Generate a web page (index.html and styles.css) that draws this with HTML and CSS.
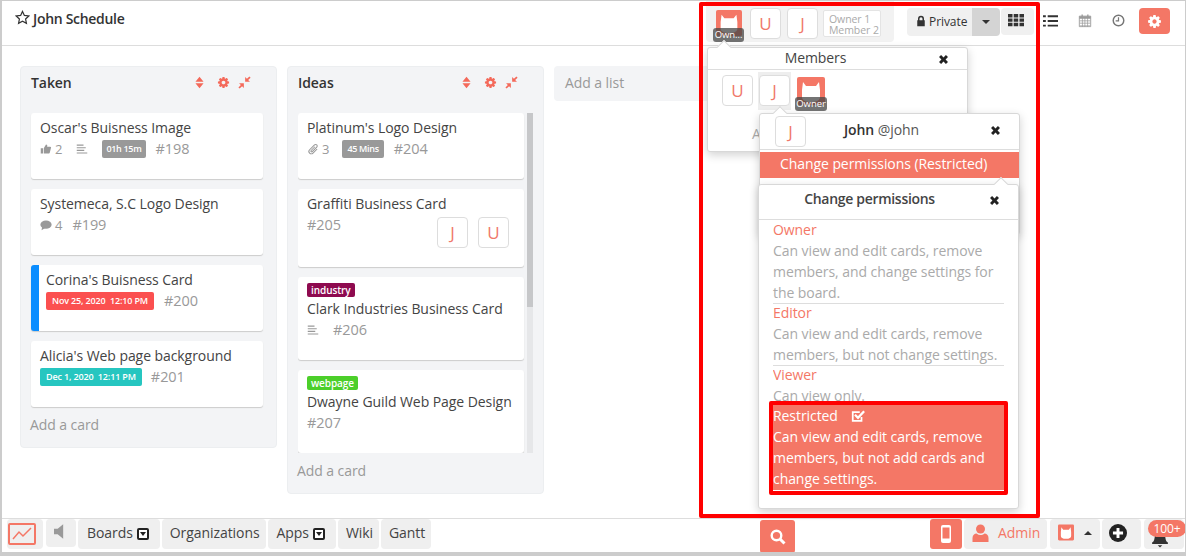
FILE: index.html
```html
<!DOCTYPE html>
<html>

<head>
    <title>John Schedule</title>
    <link rel="stylesheet" href="styles.css">
</head>

<body>
    <svg class="defs" width="0" height="0">
        <symbol id="i-cog" viewBox="0 0 1792 1792"><path fill-rule="evenodd" d="M1152 896q0-106-75-181t-181-75-181 75-75 181 75 181 181 75 181-75 75-181zm512-109v222q0 12-8 23t-20 13l-185 28q-19 54-39 91 35 50 107 138 10 12 10 25t-9 23q-27 37-99 108t-94 71q-12 0-26-9l-138-108q-44 23-91 38-16 136-29 186-7 28-36 28h-222q-14 0-24.500-8.500t-11.500-21.500l-28-184q-49-16-90-37l-141 107q-10 9-25 9-14 0-25-11-126-114-165-168-7-10-7-23 0-12 8-23 15-21 51-66.500t54-70.500q-27-50-41-99l-183-27q-13-2-21-12.500t-8-23.500v-222q0-12 8-23t19-13l186-28q14-46 39-92-40-57-107-138-10-12-10-24 0-10 9-23 26-36 98.500-107.500t94.500-71.500q13 0 26 10l138 107q44-23 91-38 16-136 29-186 7-28 36-28h222q14 0 24.500 8.500t11.500 21.500l28 184q49 16 90 37l142-107q9-9 24-9 13 0 25 10 129 119 165 170 7 8 7 22 0 12-8 23-15 21-51 66.500t-54 70.500q26 50 41 98l183 28q13 2 21 12.500t8 23.500z"/></symbol>
        <symbol id="i-times" viewBox="0 0 16 16"><path d="M4.500 1.500 8 5l3.500-3.500 3 3L11 8l3.500 3.500-3 3L8 11l-3.500 3.500-3-3L5 8 1.500 4.500z"/></symbol>
        <symbol id="i-sort" viewBox="0 0 16 16"><path d="M8 1l5 6H3zM8 15l-5-6h10z"/></symbol>
        <symbol id="i-compress" viewBox="0 0 16 16"><path d="M8.800 7.200V1.200l2.200 2.200L14 .5l1.500 1.500-3 3 2.200 2.200zM7.200 8.800v6L5 12.600 2 15.500.5 14l3-3-2.200-2.200z"/></symbol>
        <symbol id="i-lines" viewBox="0 0 16 16"><path d="M1 2h9v1.500H1zM1 5.500h12V7H1zM1 9h10v1.500H1zM1 12.500h14V14H1z"/></symbol>
        <symbol id="i-bear" viewBox="0 0 28 28"><rect width="28" height="28" rx="2" fill="#f47766"/><path d="M6 5l3 4h10l3-4 1 8v7c0 3-3 5-9 5s-9-2-9-5v-7z" fill="#fff"/></symbol>
    </svg>

    <div class="app">
        <header class="topbar">
            <div class="board-title">
                <svg class="star" viewBox="0 0 16 16"><path d="M8 1.500l2 4.300 4.700.6-3.400 3.200.9 4.700L8 12l-4.200 2.300.9-4.700L1.300 6.400 6 5.800z" fill="none" stroke="#333" stroke-width="1.300"/></svg>
                John Schedule
            </div>
            <div class="top-tools">
                <div class="member-strip">
                    <div class="owner-avatar">
                        <svg class="bear"><use href="#i-bear"/></svg>
                        <span class="owner-tag">Own...</span>
                    </div>
                    <div class="avatar">U</div>
                    <div class="avatar">J</div>
                    <div class="member-count">Owner 1<br>Member 2</div>
                </div>
                <div class="private-group">
                    <div class="private-btn">
                        <svg class="ico-12" viewBox="0 0 16 16"><path d="M4 7V5a4 4 0 0 1 8 0v2h1v8H3V7zm2 0h4V5a2 2 0 0 0-4 0z" fill="#333"/></svg>
                        Private
                    </div>
                    <div class="caret-btn"><span class="caret-down"></span></div>
                </div>
                <div class="grid-btn">
                    <svg class="ico-16" viewBox="0 0 16 16" fill="#111"><path d="M0 0h4.500v3.400H0zM5.700 0h4.500v3.400H5.700zM11.500 0H16v3.400h-4.500zM0 4.400h4.500v3.400H0zM5.700 4.400h4.500v3.400H5.700zM11.500 4.400H16v3.400h-4.500zM0 8.800h4.500v3.400H0zM5.700 8.800h4.500v3.400H5.700zM11.500 8.800H16v3.400h-4.500z"/></svg>
                </div>
                <svg class="tool-ico list-ico" viewBox="0 0 16 16" fill="#999"><path d="M0 2.500h3v2H0zM5 2.500h11v2H5zM0 7.500h3v2H0zM5 7.500h11v2H5zM0 12.500h3v2H0zM5 12.500h11v2H5z"/></svg>
                <svg class="tool-ico cal-ico" viewBox="0 0 16 16"><path d="M1.500 3h13v12h-13z" fill="none" stroke="#999"/><path d="M1.500 3h13v3h-13zM4 1h1.500v3H4zM10.500 1H12v3h-1.500zM2 8h12v.8H2zM2 10.500h12v.8H2zM2 13h12v.8H2zM4.500 6h.8v9h-.8zM7.500 6h.8v9h-.8zM10.700 6h.8v9h-.8z" fill="#999"/></svg>
                <svg class="tool-ico clock-ico" viewBox="0 0 16 16"><circle cx="8" cy="8" r="6.500" fill="none" stroke="#777" stroke-width="1.800"/><path d="M8 4v4.500H4.500" fill="none" stroke="#777" stroke-width="1.500"/></svg>
                <div class="settings-btn"><svg class="ico-14 white"><use href="#i-cog"/></svg></div>
            </div>
        </header>

        <main class="board">
            <section class="list list-taken">
                <div class="list-head">
                    <span class="list-name">Taken</span>
                    <div class="list-tools">
                        <svg class="ico-13 sort-ico"><use href="#i-sort"/></svg>
                        <svg class="ico-13"><use href="#i-cog"/></svg>
                        <svg class="ico-13"><use href="#i-compress"/></svg>
                    </div>
                </div>
                <div class="cards">
                    <div class="card">
                        <div class="card-title">Oscar's Buisness Image</div>
                        <div class="card-meta">
                            <svg class="meta-ico" viewBox="0 0 16 16" fill="#999"><path d="M1 7h3v7H1zM5 7l3-5c1.500 0 2 1 1.500 3h4c1.500 0 1.500 1.500 1 2l-1.500 6c-.2.700-.5 1-1.500 1H5z"/></svg>
                            <span class="count">2</span>
                            <svg class="meta-ico gap-l" fill="#999"><use href="#i-lines"/></svg>
                            <span class="time-pill pill-wide">01h 15m</span>
                            <span class="card-no">#198</span>
                        </div>
                    </div>
                    <div class="card">
                        <div class="card-title">Systemeca, S.C Logo Design</div>
                        <div class="card-meta">
                            <svg class="meta-ico" viewBox="0 0 16 16" fill="#999"><ellipse cx="8" cy="7.500" rx="7.500" ry="5.500"/><path d="M3 10l-1 5 5-3z"/></svg>
                            <span class="count">4</span>
                            <span class="card-no">#199</span>
                        </div>
                    </div>
                    <div class="card card-flagged">
                        <div class="card-title">Corina's Buisness Card</div>
                        <div class="card-meta">
                            <span class="date-pill date-late">Nov 25, 2020&nbsp; 12:10 PM</span>
                            <span class="card-no">#200</span>
                        </div>
                    </div>
                    <div class="card">
                        <div class="card-title">Alicia's Web page background</div>
                        <div class="card-meta">
                            <span class="date-pill date-soon">Dec 1, 2020&nbsp; 12:11 PM</span>
                            <span class="card-no">#201</span>
                        </div>
                    </div>
                </div>
                <div class="add-card">Add a card</div>
            </section>

            <section class="list list-ideas">
                <div class="list-head">
                    <span class="list-name">Ideas</span>
                    <div class="list-tools">
                        <svg class="ico-13 sort-ico"><use href="#i-sort"/></svg>
                        <svg class="ico-13"><use href="#i-cog"/></svg>
                        <svg class="ico-13"><use href="#i-compress"/></svg>
                    </div>
                </div>
                <div class="cards-scroll">
                    <div class="cards">
                        <div class="card">
                            <div class="card-title">Platinum's Logo Design</div>
                            <div class="card-meta">
                                <svg class="meta-ico" viewBox="0 0 16 16"><path d="M13.500 8l-5.500 5.500a3 3 0 0 1-4.500-4.500l6.500-6.500a2 2 0 0 1 3 3l-6 6a1 1 0 0 1-1.500-1.500l5-5" fill="none" stroke="#999" stroke-width="1.400"/></svg>
                                <span class="count">3</span>
                                <span class="time-pill">45 Mins</span>
                                <span class="card-no">#204</span>
                            </div>
                        </div>
                        <div class="card card-tall">
                            <div class="card-title">Graffiti Business Card</div>
                            <div class="card-meta"><span class="card-no no-gap">#205</span></div>
                            <div class="card-people">
                                <div class="avatar">J</div>
                                <div class="avatar">U</div>
                            </div>
                        </div>
                        <div class="card">
                            <span class="label label-industry">industry</span>
                            <div class="card-title">Clark Industries Business Card</div>
                            <div class="card-meta">
                                <svg class="meta-ico" fill="#999"><use href="#i-lines"/></svg>
                                <span class="card-no no-206">#206</span>
                            </div>
                        </div>
                        <div class="card">
                            <span class="label label-webpage">webpage</span>
                            <div class="card-title">Dwayne Guild Web Page Design</div>
                            <div class="card-meta"><span class="card-no no-gap">#207</span></div>
                        </div>
                    </div>
                    <div class="scroll-thumb"></div>
                </div>
                <div class="add-card">Add a card</div>
            </section>

            <div class="add-list">Add a list</div>
        </main>

        <footer class="bottombar">
            <nav class="bottom-left">
                <div class="bar-btn logo-btn">
                    <svg class="chart-ico" viewBox="0 0 28 22"><rect x="1" y="1" width="26" height="20" rx="1" fill="none" stroke="#f47766" stroke-width="2"/><path d="M5 16l6-7 4 4 8-8" fill="none" stroke="#f47766" stroke-width="1.500"/></svg>
                </div>
                <div class="bar-btn sound-btn">
                    <svg class="sound-ico" viewBox="0 0 12 18"><path d="M0 6h4l6-5v16l-6-5H0z" fill="#999"/></svg>
                </div>
                <div class="bar-btn has-caret">Boards <span class="square-caret"></span></div>
                <div class="bar-btn">Organizations</div>
                <div class="bar-btn has-caret">Apps <span class="square-caret"></span></div>
                <div class="bar-btn">Wiki</div>
                <div class="bar-btn">Gantt</div>
            </nav>
            <div class="search-btn">
                <svg class="search-ico" viewBox="0 0 16 16"><circle cx="6.500" cy="6.500" r="4.800" fill="none" stroke="#fff" stroke-width="2.400"/><path d="M10 10l4.500 4.500" stroke="#fff" stroke-width="3"/></svg>
            </div>
            <div class="bottom-right">
                <div class="phone-btn">
                    <svg class="phone-ico" viewBox="0 0 10 18"><rect width="10" height="18" rx="2" fill="#fff"/><rect x="1.500" y="2.500" width="7" height="11" fill="#f47766"/></svg>
                </div>
                <div class="bar-btn admin-btn">
                    <svg class="user-ico" viewBox="0 0 16 18" fill="#f47766"><circle cx="8" cy="5" r="4.500"/><path d="M0 18v-4c0-3 2-4.500 4-4.500 2.500 2 5.500 2 8 0 2 0 4 1.500 4 4.500v4z"/></svg>
                    Admin
                </div>
                <div class="bar-btn shield-btn">
                    <svg class="shield-ico"><use href="#i-bear"/></svg>
                    <span class="caret-up"></span>
                </div>
                <div class="bar-btn plus-btn">
                    <svg class="plus-ico" viewBox="0 0 16 16"><circle cx="8" cy="8" r="8" fill="#222"/><path d="M6.700 3.500h2.600v3.200h3.200v2.600H9.300v3.200H6.700V9.300H3.500V6.700h3.200z" fill="#fff"/></svg>
                </div>
                <div class="bar-btn bell-btn">
                    <svg class="bell-ico" viewBox="0 0 16 16"><path d="M1 11c2-1 2-3 2.500-6h9c.5 3 .5 5 2.500 6v1.500H1zM6 13.500h4L8 15.500z" fill="#333"/></svg>
                </div>
            </div>
        </footer>

        <!-- popovers -->
        <div class="pop pop-members">
            <div class="pop-head">Members<svg class="pop-close"><use href="#i-times"/></svg></div>
            <div class="pop-people">
                <div class="avatar">U</div>
                <div class="avatar-hl"><div class="avatar">J</div></div>
                <div class="owner-avatar owner-lg">
                    <svg class="bear"><use href="#i-bear"/></svg>
                    <span class="owner-tag">Owner</span>
                </div>
            </div>
            <div class="pop-add">A</div>
        </div>

        <div class="pop pop-john">
            <div class="pop-head john-head">
                <div class="avatar john-avatar">J</div>
                <span><b>John</b> @john</span>
                <svg class="pop-close"><use href="#i-times"/></svg>
            </div>
            <div class="perm-link">Change permissions (Restricted)</div>
        </div>

        <div class="pop pop-perms">
            <div class="pop-head perms-head">Change permissions<svg class="pop-close"><use href="#i-times"/></svg></div>
            <div class="perm-list">
                <div class="perm">
                    <div class="perm-name">Owner</div>
                    Can view and edit cards, remove members, and change settings for the board.
                </div>
                <div class="perm">
                    <div class="perm-name">Editor</div>
                    Can view and edit cards, remove members, but not change settings.
                </div>
                <div class="perm perm-last">
                    <div class="perm-name">Viewer</div>
                    Can view only.
                </div>
                <div class="perm perm-active">
                    <div class="perm-name">Restricted
                        <svg class="check-ico" viewBox="0 0 16 16"><path d="M12 9v4.500H2V3.500h8" fill="none" stroke="#fff" stroke-width="2"/><path d="M4.500 6.500l3.500 3.500 7-7.500" fill="none" stroke="#fff" stroke-width="2.600"/></svg>
                    </div>
                    Can view and edit cards, remove members, but not add cards and change settings.
                </div>
            </div>
        </div>

        <!-- red marks on the screenshot -->
        <div class="mark mark-big"></div>
        <div class="mark mark-small"></div>

        <div class="bell-badge">100+</div>
    </div>
</body>

</html>
```

FILE: styles.css
```css
* {
    box-sizing: border-box;
}

body {
    margin: 0;
    font-family: "Open Sans", "Liberation Sans", sans-serif;
    font-size: 14px;
    letter-spacing: -0.07px;
    color: #333;
    background: #fff;
    overflow: hidden;
}

svg {
    fill: currentColor;
    display: block;
    flex: none;
}

.defs {
    position: absolute;
}

.app {
    position: relative;
    display: flex;
    flex-direction: column;
    width: 1186px;
    height: 556px;
    border-top: 1px solid #ccc;
    border-left: 2px solid #ccc;
    border-right: 1px solid #ccc;
    border-bottom: 4px solid #ccc;
    overflow: hidden;
}

/* top bar */
.topbar {
    display: flex;
    justify-content: space-between;
    height: 45px;
    flex: none;
    border-bottom: 1px solid #ddd;
}

.board-title {
    display: flex;
    gap: 3px;
    padding: 9px 0 0 13px;
    font-weight: 600;
    font-size: 14px;
    line-height: 18px;
    letter-spacing: -0.3px;
}

.star {
    width: 15px;
    height: 15px;
}

.top-tools {
    display: flex;
    align-items: flex-start;
    padding-right: 15px;
}

.member-strip {
    display: flex;
    align-items: flex-start;
    width: 188px;
    height: 41px;
    padding: 7px 0 0 10px;
    background: #f2f2f2;
    border-radius: 0 0 4px 4px;
}

.owner-avatar {
    position: relative;
    width: 26px;
    height: 27px;
    margin: 2px 8px 0 0;
}

.bear {
    width: 26px;
    height: 26px;
}

.owner-tag {
    position: absolute;
    left: -3px;
    bottom: -5px;
    width: 31px;
    height: 14px;
    background: rgba(70, 70, 70, 0.75);
    border-radius: 3px;
    color: #fff;
    font-size: 9.5px;
    line-height: 14px;
    text-align: center;
    white-space: nowrap;
    overflow: hidden;
}

.avatar {
    display: flex;
    align-items: center;
    justify-content: center;
    width: 31px;
    height: 31px;
    background: #fff;
    border: 1px solid #ddd;
    border-radius: 4px;
    color: #f0786a;
    font-size: 17px;
    flex: none;
}

.member-strip .avatar {
    margin-right: 6px;
}

.member-count {
    width: 58px;
    height: 27px;
    margin: 2px 0 0 -1px;
    padding: 3px 0 0 5px;
    background: #fff;
    border: 1px solid #e4e4e4;
    border-radius: 2px;
    color: #aaa;
    font-size: 10.5px;
    line-height: 11px;
    white-space: nowrap;
    overflow: hidden;
}

.private-group {
    display: flex;
    height: 28px;
    margin: 7px 1px 0 13px;
}

.private-btn {
    display: flex;
    align-items: center;
    gap: 2px;
    width: 65px;
    padding: 0 0 2px 8px;
    background: #f0f0f0;
    border-radius: 4px 0 0 4px;
    font-size: 12px;
}

.caret-btn {
    display: flex;
    align-items: center;
    justify-content: center;
    width: 28px;
    background: #d4d4d4;
    border-radius: 0 4px 4px 0;
}

.caret-down {
    border-left: 4px solid transparent;
    border-right: 4px solid transparent;
    border-top: 4px solid #333;
}

.ico-12 {
    width: 12px;
    height: 12px;
}

.ico-13 {
    width: 13px;
    height: 13px;
}

.ico-14 {
    width: 15px;
    height: 15px;
}

.ico-16 {
    width: 16px;
    height: 16px;
}

.white {
    color: #fff;
}

.grid-btn {
    width: 33px;
    height: 27px;
    margin-top: 7px;
    padding: 6px 0 0 7px;
    background: #f0f0f0;
    border-radius: 4px;
}

.tool-ico {
    width: 15px;
    height: 15px;
    margin-top: 12px;
}

.list-ico {
    margin-left: 9px;
}

.cal-ico {
    width: 14px;
    margin-left: 20px;
}

.clock-ico {
    width: 13px;
    margin-left: 20px;
}

.settings-btn {
    display: flex;
    align-items: center;
    justify-content: center;
    width: 31px;
    height: 26px;
    margin: 7px 0 0 14px;
    background: #f47766;
    border-radius: 4px;
}

/* board */
.board {
    flex: 1;
    display: flex;
    align-items: flex-start;
    gap: 10px;
    padding: 20px 0 0 18px;
    overflow: hidden;
}

.list {
    width: 257px;
    flex: none;
    background: #f3f4f6;
    border: 1px solid #eceef0;
    border-radius: 4px;
    padding: 0 0 0 10px;
}

.list-head {
    display: flex;
    justify-content: space-between;
    align-items: flex-start;
    height: 46px;
    padding-top: 6px;
}

.list-name {
    font-weight: 600;
    font-size: 14px;
    line-height: 20px;
}

.list-tools {
    display: flex;
    gap: 8px;
    padding: 3px 25px 0 0;
    color: #f4695a;
}

.sort-ico {
    margin-right: 3px;
}

.cards {
    display: flex;
    flex-direction: column;
    gap: 10px;
    width: 232px;
}

.card {
    position: relative;
    height: 66px;
    padding: 5px 9px 0;
    background: #fff;
    border-radius: 3px;
    box-shadow: 0 1px 1px #ccc;
}

.card-flagged {
    padding-left: 15px;
    border-left: 8px solid #0a8dff;
}

.card-flagged .card-title,
.card-flagged .card-meta {
    margin-left: -8px;
}

.card-tall {
    height: 78px;
}

.card-title {
    font-size: 14px;
    line-height: 20px;
    color: #444;
    white-space: nowrap;
}

.card-meta {
    display: flex;
    align-items: center;
    height: 21px;
    color: #999;
}

.meta-ico {
    width: 12px;
    height: 12px;
}

.gap-l {
    margin-left: 14px;
}

.count {
    margin-left: 3px;
    font-size: 13px;
}

.time-pill {
    margin-left: 13px;
    padding: 0 5px;
    height: 18px;
    line-height: 18px;
    background: #999;
    border-radius: 2px;
    color: #fff;
    font-size: 9px;
    font-weight: 600;
    letter-spacing: -0.3px;
    white-space: nowrap;
}

.pill-wide {
    margin-left: 14px;
    padding: 0 4px;
}

.date-pill {
    height: 18px;
    padding: 0 6px;
    line-height: 18px;
    border-radius: 2px;
    color: #fff;
    font-size: 9px;
    font-weight: 600;
    letter-spacing: -0.15px;
    white-space: nowrap;
}

.date-late {
    background: #fb5050;
}

.date-soon {
    background: #26c6c0;
}

.card-no {
    margin-left: 10px;
    font-size: 14.5px;
}

.date-soon + .card-no {
    margin-left: 9px;
}

.no-gap {
    margin-left: 0;
}

.no-206 {
    margin-left: 14px;
}

.card-people {
    position: absolute;
    top: 28px;
    left: 139px;
    display: flex;
    gap: 10px;
}

.label {
    display: block;
    width: max-content;
    height: 14px;
    padding: 0 4px;
    margin: 1px 0 2px;
    border-radius: 2px;
    color: #fff;
    font-size: 10px;
    font-weight: 600;
    line-height: 14px;
}

.label-industry {
    background: #8e0a4f;
}

.label-webpage {
    background: #4ccf2a;
}

.list-ideas .cards {
    width: 226px;
}

.list-ideas .card:nth-child(3),
.list-ideas .card:nth-child(4) {
    height: 83px;
}

.cards-scroll {
    position: relative;
    height: 340px;
    overflow: hidden;
}

.scroll-thumb {
    position: absolute;
    top: 0;
    left: 229px;
    width: 6px;
    height: 340px;
    background: #e6e7e9;
}

.scroll-thumb::before {
    content: "";
    display: block;
    height: 194px;
    background: #c6c7c9;
}

.add-card {
    height: 40px;
    padding-top: 8px;
    color: #999;
    font-size: 14px;
    margin-left: -1px;
}

.add-list {
    width: 160px;
    height: 35px;
    flex: none;
    padding: 7px 11px;
    background: #f3f4f6;
    border-radius: 4px;
    color: #999;
}

/* bottom bar */
.bottombar {
    display: flex;
    height: 34px;
    flex: none;
    border-top: 1px solid #ddd;
}

.bottom-left,
.bottom-right {
    display: flex;
    gap: 2px;
    height: 31px;
}

.bottom-left {
    padding-left: 5px;
    width: 758px;
}

.bar-btn {
    display: flex;
    align-items: center;
    gap: 4px;
    padding: 0 6px 3px 8px;
    height: 30px;
    background: #efefef;
    border-radius: 4px;
    color: #444;
    font-size: 14px;
    white-space: nowrap;
}

.has-caret {
    padding: 0 11px 3px 9px;
}

.logo-btn {
    width: 36px;
    padding: 0 0 0 1px;
}

.chart-ico {
    width: 28px;
    height: 22px;
}

.sound-btn {
    width: 30px;
    height: 28px;
    margin-left: 1px;
    align-items: flex-start;
    padding: 4px 0 0 8px;
}

.sound-ico {
    width: 11px;
    height: 17px;
}

.square-caret {
    position: relative;
    display: inline-block;
    width: 12px;
    height: 12px;
    margin-top: 2px;
    background: #fff;
    border: 2px solid #222;
    border-radius: 2px;
}

.square-caret::after {
    content: "";
    position: absolute;
    left: 1px;
    top: 2px;
    border-left: 3px solid transparent;
    border-right: 3px solid transparent;
    border-top: 4px solid #222;
}

.search-btn {
    display: flex;
    align-items: center;
    justify-content: center;
    width: 35px;
    height: 33px;
    margin-top: 1px;
    background: #f47766;
    border-radius: 3px;
}

.search-ico {
    width: 16px;
    height: 16px;
}

.bottom-right {
    width: 255px;
    margin-left: auto;
}

.phone-btn {
    display: flex;
    align-items: center;
    justify-content: center;
    width: 32px;
    height: 30px;
    background: #f47766;
    border-radius: 3px;
}

.phone-ico {
    width: 10px;
    height: 18px;
}

.admin-btn {
    width: 83px;
    gap: 9px;
    color: #f47766;
}

.user-ico {
    width: 17px;
    height: 18px;
}

.shield-btn {
    width: 50px;
    margin-left: 1px;
    gap: 10px;
}

.shield-ico {
    width: 16px;
    height: 17px;
}

.caret-up {
    border-left: 4px solid transparent;
    border-right: 4px solid transparent;
    border-bottom: 4px solid #333;
}

.plus-btn {
    width: 39px;
    padding-left: 7px;
}

.plus-ico {
    width: 18px;
    height: 18px;
}

.bell-btn {
    width: 40px;
    margin-left: 1px;
    padding: 10px 0 0 7px;
}

.bell-ico {
    width: 18px;
    height: 18px;
}

.bell-badge {
    position: absolute;
    left: 1146px;
    top: 519px;
    width: 38px;
    height: 17px;
    background: #f47766;
    border-radius: 9px;
    color: #fff;
    font-size: 12px;
    line-height: 17px;
    text-align: center;
}

/* popovers */
.pop {
    position: absolute;
    background: #fff;
    border: 1px solid #d8d8d8;
    border-radius: 3px;
    box-shadow: 0 3px 10px rgba(0, 0, 0, 0.18);
}

.pop::before {
    content: "";
    position: absolute;
    top: -6px;
    width: 9px;
    height: 9px;
    background: #fff;
    border-top: 1px solid #d8d8d8;
    border-left: 1px solid #d8d8d8;
    transform: rotate(45deg);
}

.pop-head {
    position: relative;
    height: 22px;
    border-bottom: 1px solid #ddd;
    text-align: center;
    font-size: 14px;
    line-height: 19px;
    padding-right: 44px;
    color: #444;
}

.pop-close {
    position: absolute;
    top: 6px;
    right: 18px;
    width: 11px;
    height: 11px;
    color: #222;
}

.pop-members {
    left: 705px;
    top: 46px;
    width: 261px;
    height: 105px;
}

.pop-members::before {
    left: 11px;
}

.pop-people {
    display: flex;
    align-items: flex-start;
    padding: 5px 0 0 14px;
}

.avatar-hl {
    width: 33px;
    height: 38px;
    margin: -3px 6px 0 5px;
    padding: 3px 1px;
    background: #eee;
}

.avatar-hl .avatar {
    width: 31px;
}

.owner-lg {
    width: 28px;
    margin: 2px 0 0 0;
}

.owner-lg .bear {
    width: 28px;
    height: 28px;
}

.owner-lg .owner-tag {
    bottom: -7px;
    left: -2px;
    width: 32px;
}

.pop-add {
    margin: 14px 0 0 44px;
    color: #aaa;
}

.pop-john {
    left: 757px;
    top: 112px;
    width: 261px;
    height: 122px;
}

.pop-john::before {
    left: 15px;
}

.john-head {
    height: 36px;
    line-height: 31px;
    padding-right: 16px;
    color: #555;
}

.john-head b {
    font-weight: 600;
    color: #333;
}

.john-avatar {
    position: absolute;
    left: 15px;
    top: 2px;
}

.john-head .pop-close {
    top: 11px;
    right: 18px;
}

.perm-link {
    height: 26px;
    margin-top: 2px;
    padding-left: 20px;
    background: #f47766;
    color: #fff;
    font-size: 14px;
    line-height: 24px;
}

.pop-perms {
    left: 756px;
    top: 183px;
    width: 261px;
    height: 325px;
}

.pop-perms::before {
    left: 237px;
}

.perms-head {
    height: 35px;
    line-height: 28px;
    font-weight: 600;
    font-size: 14px;
    letter-spacing: -0.3px;
    padding-right: 38px;
}

.perms-head .pop-close {
    top: 10px;
    right: 18px;
}

.perm-list {
    margin-top: -1px;
    padding: 0 14px;
    color: #aaa;
    font-size: 14px;
    line-height: 21px;
}

.perm {
    margin-bottom: -2px;
    border-bottom: 1px solid #ddd;
}

.perm-name {
    display: flex;
    align-items: center;
    gap: 13px;
    color: #f47766;
}

.perm-last {
    height: 41px;
    margin-bottom: 0;
    border-bottom: 0;
    overflow: hidden;
}

.perm-active {
    height: 85px;
    margin-bottom: 0;
    background: #f47766;
    color: #fff;
    outline: 1px solid #fff;
    border-bottom: 0;
}

.perm-active .perm-name {
    color: #fff;
}

.check-ico {
    width: 14px;
    height: 14px;
}

/* red annotation boxes */
.mark {
    position: absolute;
    border: 4px solid #f00;
    border-radius: 2px;
}

.mark-big {
    left: 697px;
    top: 1px;
    width: 341px;
    height: 516px;
}

.mark-small {
    left: 767px;
    top: 400px;
    width: 239px;
    height: 94px;
}
```
